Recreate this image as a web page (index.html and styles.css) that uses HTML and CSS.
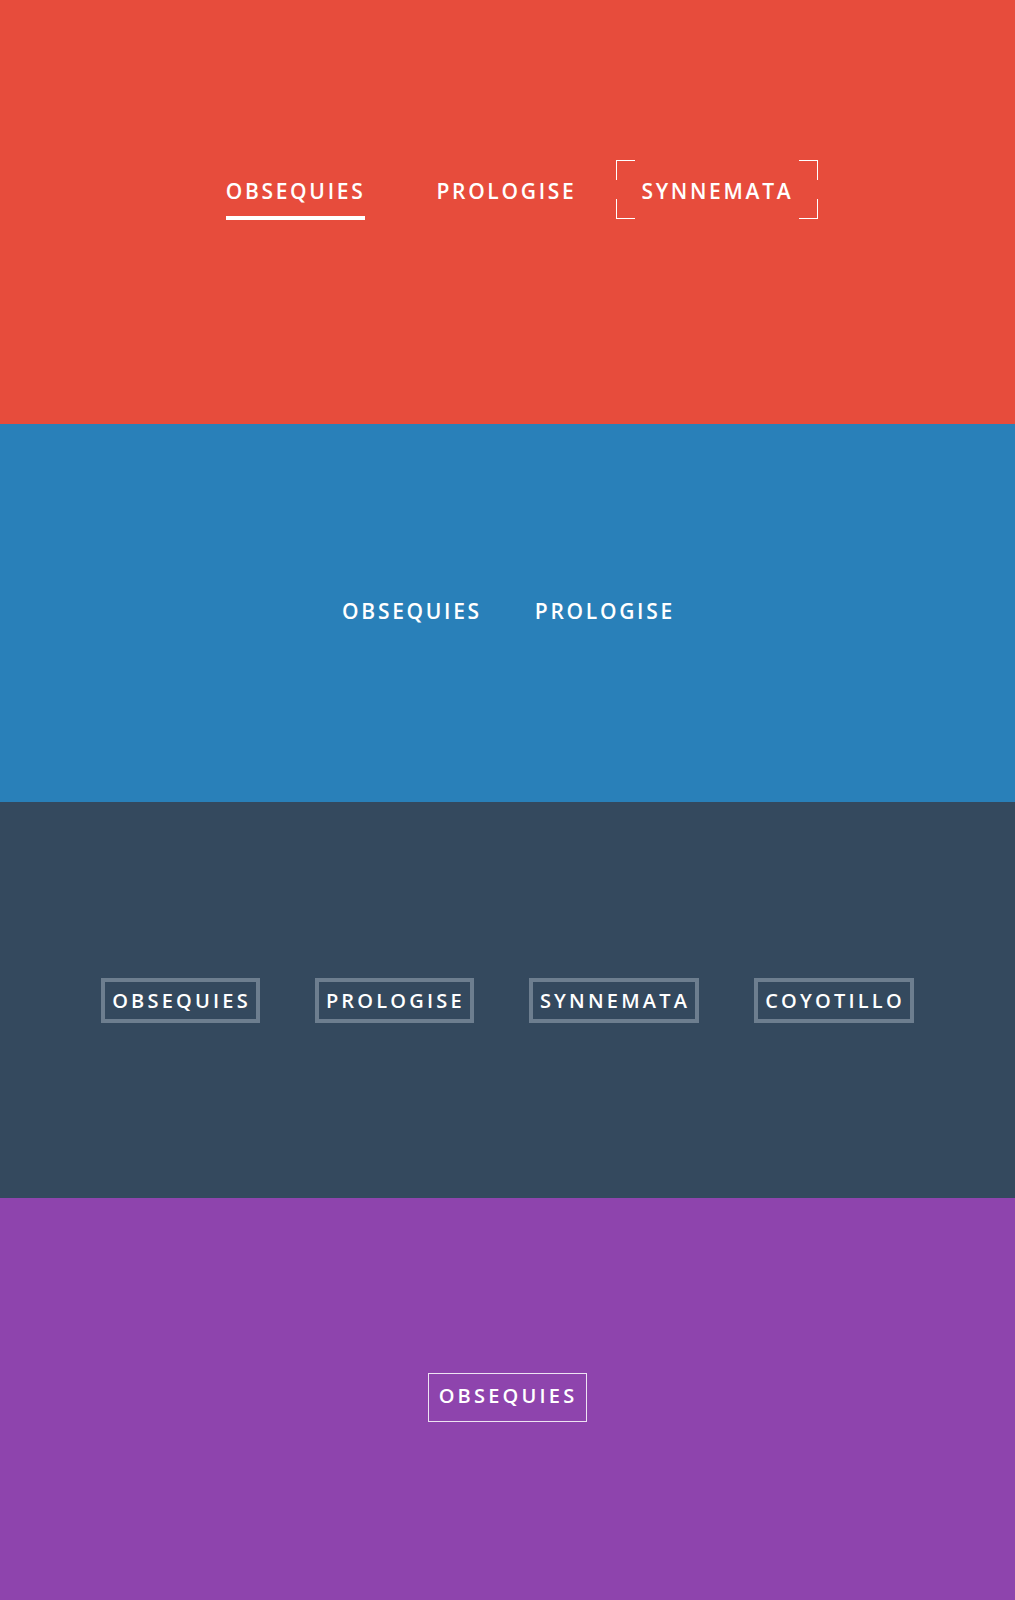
FILE: index.html
```html
<!DOCTYPE html>
<html lang="en">
<head>
<meta charset="utf-8">
<title>Link effects</title>
<link rel="stylesheet" href="styles.css">
</head>
<body>
<section class="sec sec-red">
  <nav class="nav nav-red">
    <a class="link link-current" href="#">Obsequies</a>
    <a class="link link-plain" href="#">Prologise</a>
    <a class="link link-bracket" href="#">Synnemata</a>
  </nav>
</section>
<section class="sec sec-blue">
  <nav class="nav nav-blue">
    <a class="link" href="#">Obsequies</a>
    <a class="link" href="#">Prologise</a>
  </nav>
</section>
<section class="sec sec-dark">
  <nav class="nav nav-dark">
    <a class="link link-box" href="#">Obsequies</a>
    <a class="link link-box" href="#">Prologise</a>
    <a class="link link-box" href="#">Synnemata</a>
    <a class="link link-box" href="#">Coyotillo</a>
  </nav>
</section>
<section class="sec sec-purple">
  <nav class="nav nav-purple">
    <a class="link link-thin" href="#">Obsequies</a>
  </nav>
</section>
</body>
</html>
```
FILE: styles.css
```css
* { box-sizing: border-box; }
html, body { margin: 0; padding: 0; }
body {
  font-family: "Open Sans", "Liberation Sans", sans-serif;
  color: #fff;
}
.sec {
  display: flex;
  justify-content: center;
  align-items: center;
}
.sec-red { background: #e74c3c; height: 424px; align-items: flex-start; padding-top: 160px; padding-left: 4px; }
.sec-blue { background: #2980b9; height: 378px; padding-bottom: 4px; padding-left: 2px; }
.sec-dark { background: #34495e; height: 396px; }
.sec-purple { background: #8e44ad; height: 402px; padding-bottom: 4px; }

.nav { display: flex; align-items: center; }
.link {
  color: #fff;
  text-decoration: none;
  text-transform: uppercase;
  font-weight: 600;
  font-size: 21px;
  letter-spacing: 2.7px;
  line-height: 1;
  display: inline-block;
}

/* red */
.nav-red { align-items: baseline; }
.link-current {
  padding: 0 0 14px 0;
  border-bottom: 4px solid #fff;
  margin-right: 71px;
}
.link-plain { margin-right: 65px; }
.link-bracket {
  padding: 21px 25px 17px;
  margin: 0 -25px;
  --c: #fff;
  background:
    linear-gradient(var(--c), var(--c)) left top / 19px 1px no-repeat,
    linear-gradient(var(--c), var(--c)) left top / 1px 20px no-repeat,
    linear-gradient(var(--c), var(--c)) right top / 19px 1px no-repeat,
    linear-gradient(var(--c), var(--c)) right top / 1px 20px no-repeat,
    linear-gradient(var(--c), var(--c)) left bottom / 19px 1px no-repeat,
    linear-gradient(var(--c), var(--c)) left bottom / 1px 20px no-repeat,
    linear-gradient(var(--c), var(--c)) right bottom / 19px 1px no-repeat,
    linear-gradient(var(--c), var(--c)) right bottom / 1px 20px no-repeat;
}

/* blue */
.nav-blue { gap: 53px; }

/* dark */
.nav-dark { gap: 55px; }
.link-box {
  font-size: 20px;
  letter-spacing: 3.2px;
  border: 4px solid #6d7e8f;
  padding: 9px 5px 8px 7px;
}

/* purple */
.link-thin {
  font-size: 20px;
  letter-spacing: 3.2px;
  border: 1px solid rgba(255,255,255,0.85);
  padding: 12px 9px 15px 10px;
}
```
